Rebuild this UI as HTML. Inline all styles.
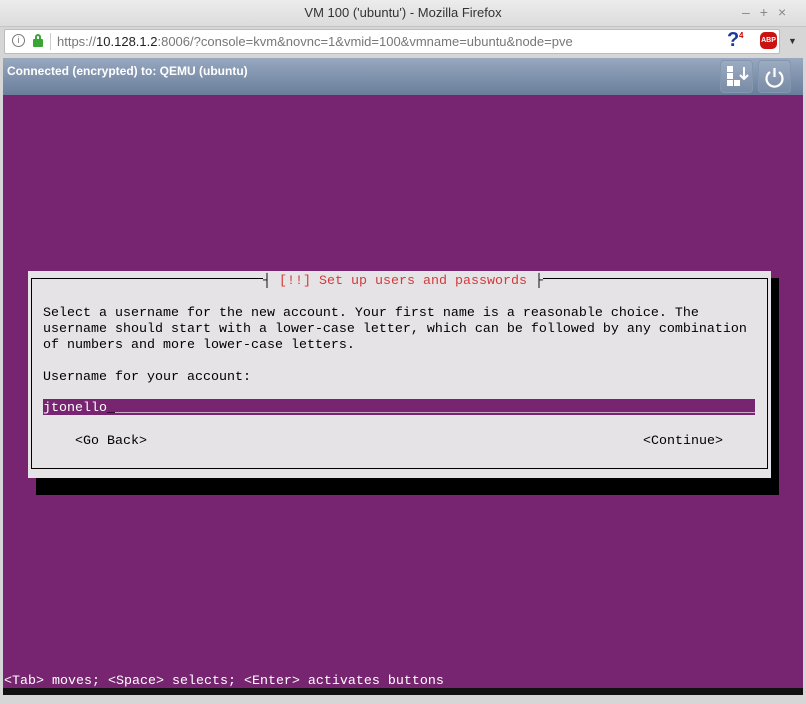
<!DOCTYPE html>
<html><head><meta charset="utf-8"><style>
*{margin:0;padding:0;box-sizing:border-box}
body{width:806px;height:704px;overflow:hidden;background:#d6d6d6;font-family:"Liberation Sans",sans-serif;position:relative}
.abs{position:absolute}
.mono{font-family:"Liberation Mono",monospace;font-size:13.33px;line-height:16px;white-space:pre;color:#000}
</style></head><body>
<div class="abs" style="left:0;top:0;width:806px;height:27px;background:linear-gradient(#ececec,#dcdcdc);border-bottom:1px solid #c4c4c4"></div>
<div class="abs" style="left:0;top:5px;width:806px;text-align:center;font-size:13px;color:#333">VM 100 ('ubuntu') - Mozilla Firefox</div>
<div class="abs" style="left:742px;top:4px;font-size:14px;color:#888;letter-spacing:10px">–+×</div>
<div class="abs" style="left:4px;top:29px;width:776px;height:25px;background:#fff;border:1px solid #bcbcbc;border-radius:2px"></div>
<div class="abs" style="left:12px;top:34px;width:13px;height:13px;border:1px solid #777;border-radius:50%;font-size:9px;text-align:center;line-height:11px;color:#777">i</div>
<div class="abs" style="left:33px;top:39px;width:10px;height:8px;background:#3aa535;border-radius:1px"></div>
<div class="abs" style="left:35px;top:34px;width:6px;height:7px;border:2px solid #3aa535;border-bottom:none;border-radius:3px 3px 0 0"></div>
<div class="abs" style="left:50px;top:33px;width:1px;height:17px;background:#ccc"></div>
<div class="abs" style="left:57px;top:34px;font-size:13px;color:#777">https://<span style="color:#222">10.128.1.2</span>:8006/?console=kvm&amp;novnc=1&amp;vmid=100&amp;vmname=ubuntu&amp;node=pve</div>
<div class="abs" style="left:727px;top:29px;font-size:20px;font-weight:bold;color:#1a3a9a">?</div>
<div class="abs" style="left:739px;top:31px;font-size:8px;color:#c00;font-weight:bold">4</div>
<div class="abs" style="left:760px;top:32px;width:17px;height:17px;background:#c11;border-radius:5px;color:#fff;font-size:7px;font-weight:bold;text-align:center;line-height:17px">ABP</div>
<div class="abs" style="left:788px;top:36px;font-size:9px;color:#333">▼</div>
<div class="abs" style="left:3px;top:58px;width:800px;height:37px;background:linear-gradient(#97a8bf,#6a7e9b)"></div>
<div class="abs" style="left:7px;top:64px;font-size:12px;font-weight:bold;color:#fff">Connected (encrypted) to: QEMU (ubuntu)</div>
<div class="abs" style="left:720px;top:60px;width:33px;height:33px;border:1px solid #8497b1;border-radius:4px;background:rgba(255,255,255,.08)"></div>
<div class="abs" style="left:758px;top:60px;width:33px;height:33px;border:1px solid #8497b1;border-radius:4px;background:rgba(255,255,255,.08)"></div>
<svg class="abs" style="left:720px;top:60px" width="33" height="33"><g fill="#fff"><rect x="7" y="6" width="6" height="6"/><rect x="7" y="13" width="6" height="6"/><rect x="7" y="20" width="6" height="6"/><rect x="14" y="20" width="6" height="6"/></g><path d="M24 7v12M20 15l4 4 4-4" stroke="#fff" stroke-width="2" fill="none"/></svg>
<svg class="abs" style="left:758px;top:60px" width="33" height="33"><path d="M12 12a8 8 0 1 0 9 0" stroke="#fff" stroke-width="2.2" fill="none"/><path d="M16.5 8v9" stroke="#fff" stroke-width="2.2"/></svg>
<div class="abs" style="left:3px;top:95px;width:800px;height:593px;background:#772570"></div>
<div class="abs" style="left:3px;top:688px;width:800px;height:7px;background:#111"></div>
<div class="abs" style="left:36px;top:478px;width:743px;height:17px;background:#000"></div>
<div class="abs" style="left:771px;top:278px;width:8px;height:217px;background:#000"></div>
<div class="abs" style="left:28px;top:271px;width:743px;height:207px;background:#e6e3e6"></div>
<div class="abs" style="left:31px;top:278px;width:737px;height:191px;border:1px solid #000"></div>
<div class="abs mono" style="left:263px;top:274px;background:#e6e3e6;color:#000">┤<span style="color:#d23a3a"> [!!] Set up users and passwords </span>├</div>
<div class="abs mono" style="left:43px;top:306px">Select a username for the new account. Your first name is a reasonable choice. The
username should start with a lower-case letter, which can be followed by any combination
of numbers and more lower-case letters.

Username for your account:</div>
<div class="abs" style="left:43px;top:399px;width:712px;height:16px;background:#772570"></div>
<div class="abs mono" style="left:43px;top:401px;color:#fff;width:712px;overflow:hidden">jtonello<span style="color:#000">_</span>________________________________________________________________________________</div>
<div class="abs mono" style="left:75px;top:434px">&lt;Go Back&gt;</div>
<div class="abs mono" style="left:643px;top:434px">&lt;Continue&gt;</div>
<div class="abs mono" style="left:4px;top:674px;color:#fff">&lt;Tab&gt; moves; &lt;Space&gt; selects; &lt;Enter&gt; activates buttons</div>
</body></html>
